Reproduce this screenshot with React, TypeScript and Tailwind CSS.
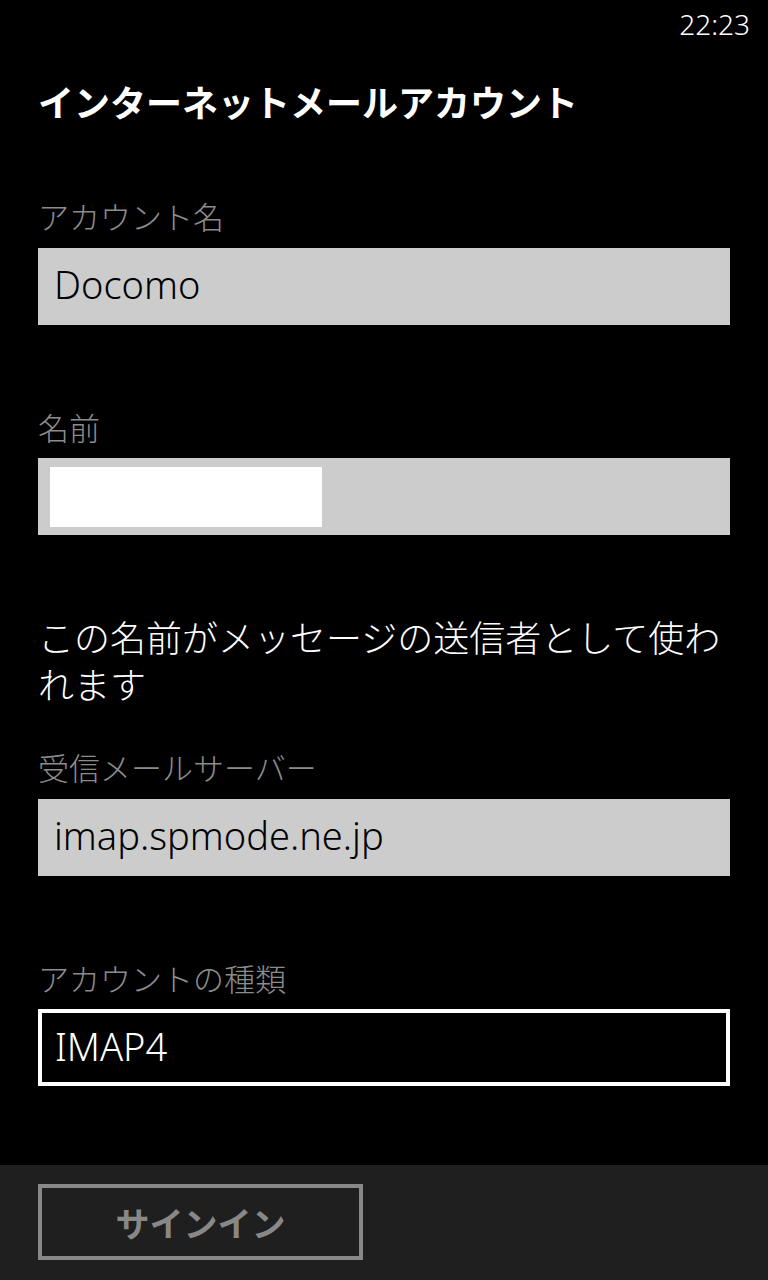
const jp = { fontFamily: '"Noto Sans CJK JP", "Noto Sans", sans-serif' };
const latin = { fontFamily: '"Noto Sans", "Noto Sans CJK JP", sans-serif' };

function Label({ text, className = "" }: { text: string; className?: string }) {
  return (
    <div className={`h-[40px] leading-[40px] text-[31px] font-light text-[#8c8c8c] ${className}`} style={jp}>
      {text}
    </div>
  );
}

function TextBox({ children }: { children?: React.ReactNode }) {
  return (
    <div className="mt-[12px] h-[77px] bg-[#cccccc] flex items-center px-[16px] pb-[4px]">
      {children}
    </div>
  );
}

export default function App() {
  return (
    <div className="w-[768px] h-[1280px] bg-black flex flex-col overflow-hidden">
      <div className="h-[48px] flex justify-end items-start pr-[18px] pt-[4px]">
        <span className="text-[28px] font-light text-white leading-[40px]" style={latin}>22:23</span>
      </div>

      <div className="px-[38px] flex flex-col">
        <h1 className="mt-[29px] h-[48px] leading-[48px] text-[36px] font-bold text-white" style={jp}>
          インターネットメールアカウント
        </h1>

        <Label text="アカウント名" className="mt-[71px]" />
        <TextBox>
          <span className="text-[38px] font-light text-black" style={latin}>Docomo</span>
        </TextBox>

        <Label text="名前" className="mt-[82px]" />
        <div className="mt-[11px] h-[77px] bg-[#cccccc] flex items-center px-[12px]">
          <div className="w-[272px] h-[60px] bg-white" />
        </div>

        <p className="mt-[78px] text-[36px] font-light leading-[47px] text-white" style={jp}>
          この名前がメッセージの送信者として使われます
        </p>

        <Label text="受信メールサーバー" className="mt-[40px]" />
        <TextBox>
          <span className="text-[38px] font-light text-black" style={latin}>imap.spmode.ne.jp</span>
        </TextBox>

        <Label text="アカウントの種類" className="mt-[82px]" />
        <div className="mt-[11px] h-[77px] border-[4px] border-white bg-black flex items-center px-[13px] pb-[3px]">
          <span className="text-[38px] font-light text-white" style={latin}>IMAP4</span>
        </div>
      </div>

      <div className="flex-1" />

      <div className="h-[115px] bg-[#1f1f1f] px-[38px] pt-[19px]">
        <div className="w-[325px] h-[76px] border-[4px] border-[#888888] flex items-center justify-center">
          <span className="text-[34px] font-bold text-[#888888]" style={jp}>サインイン</span>
        </div>
      </div>
    </div>
  );
}
